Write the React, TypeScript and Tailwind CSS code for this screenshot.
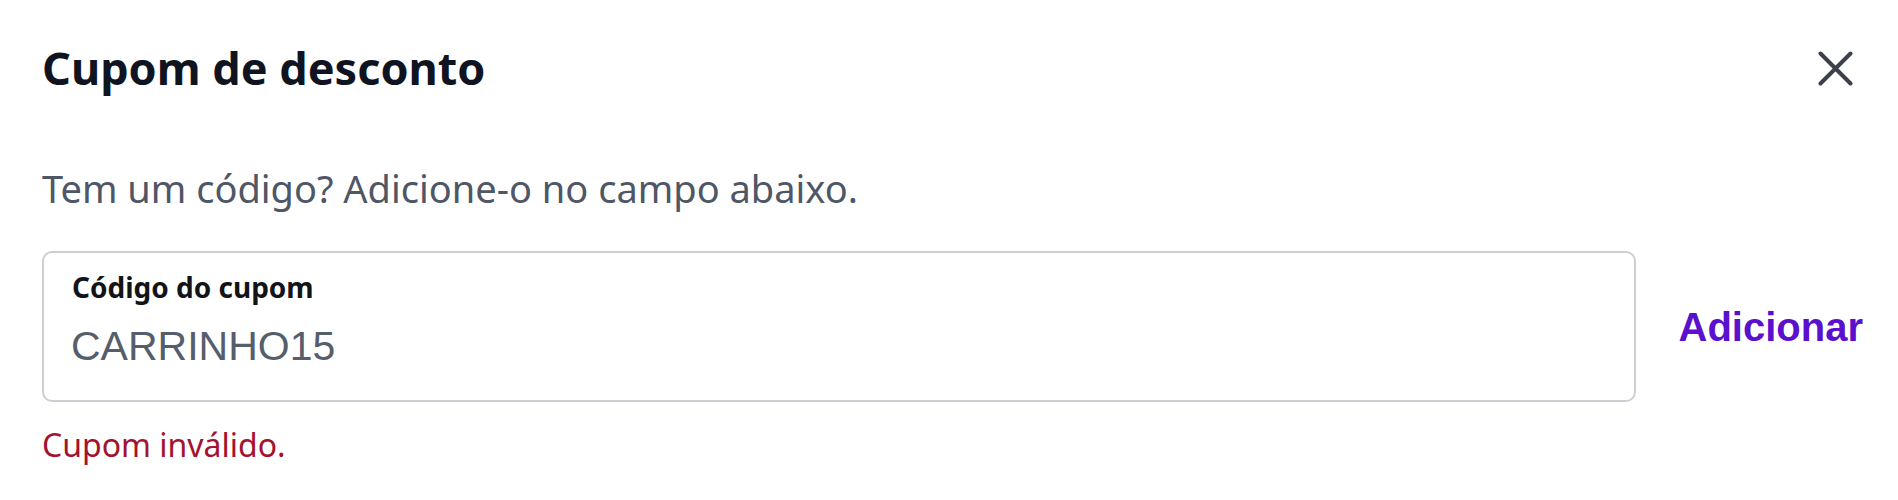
import { useState } from "react";

function CloseIcon() {
  return (
    <svg width="35" height="35" viewBox="0 0 35 35" fill="none" aria-hidden="true">
      <path
        d="M2.5 2.5L32.5 32.5M32.5 2.5L2.5 32.5"
        stroke="#3b404b"
        strokeWidth="4"
        strokeLinecap="round"
      />
    </svg>
  );
}

export default function App() {
  const [code, setCode] = useState("CARRINHO15");

  return (
    <div className="w-[1898px] h-[500px] bg-white pl-[42px] pr-[35px] pt-[40px] font-['Noto_Sans',sans-serif]">
      <div className="flex items-center justify-between">
        <h2 className="text-[45px] leading-[56px] font-bold text-[#0f1420]">
          Cupom de desconto
        </h2>
        <button className="mr-[10px] flex items-center justify-center" aria-label="Fechar">
          <CloseIcon />
        </button>
      </div>

      <p className="mt-[68px] text-[38px] leading-[48px] text-[#4f5665]">
        Tem um código? Adicione-o no campo abaixo.
      </p>

      <div className="mt-[39px] flex items-center">
        <label className="flex-1 flex flex-col h-[151px] rounded-[10px] border-2 border-[#cdcfd4] pl-[27px] pr-6 pt-[16px]">
          <span className="pl-[1px] text-[28px] leading-[36px] font-bold text-[#121417]">
            Código do cupom
          </span>
          <input
            value={code}
            onChange={(e) => setCode(e.target.value)}
            className="mt-[17px] h-[48px] text-[41px] leading-[48px] text-[#565e6c] font-['Liberation_Sans',Arial,sans-serif] outline-none bg-transparent"
          />
        </label>
        <button className="ml-[43px] text-[40px] leading-[48px] font-bold text-[#5a10cc] font-['Liberation_Sans',Arial,sans-serif]">
          Adicionar
        </button>
      </div>

      <p className="mt-[21px] text-[32px] leading-[44px] text-[#a3122f]">
        Cupom inválido.
      </p>
    </div>
  );
}
